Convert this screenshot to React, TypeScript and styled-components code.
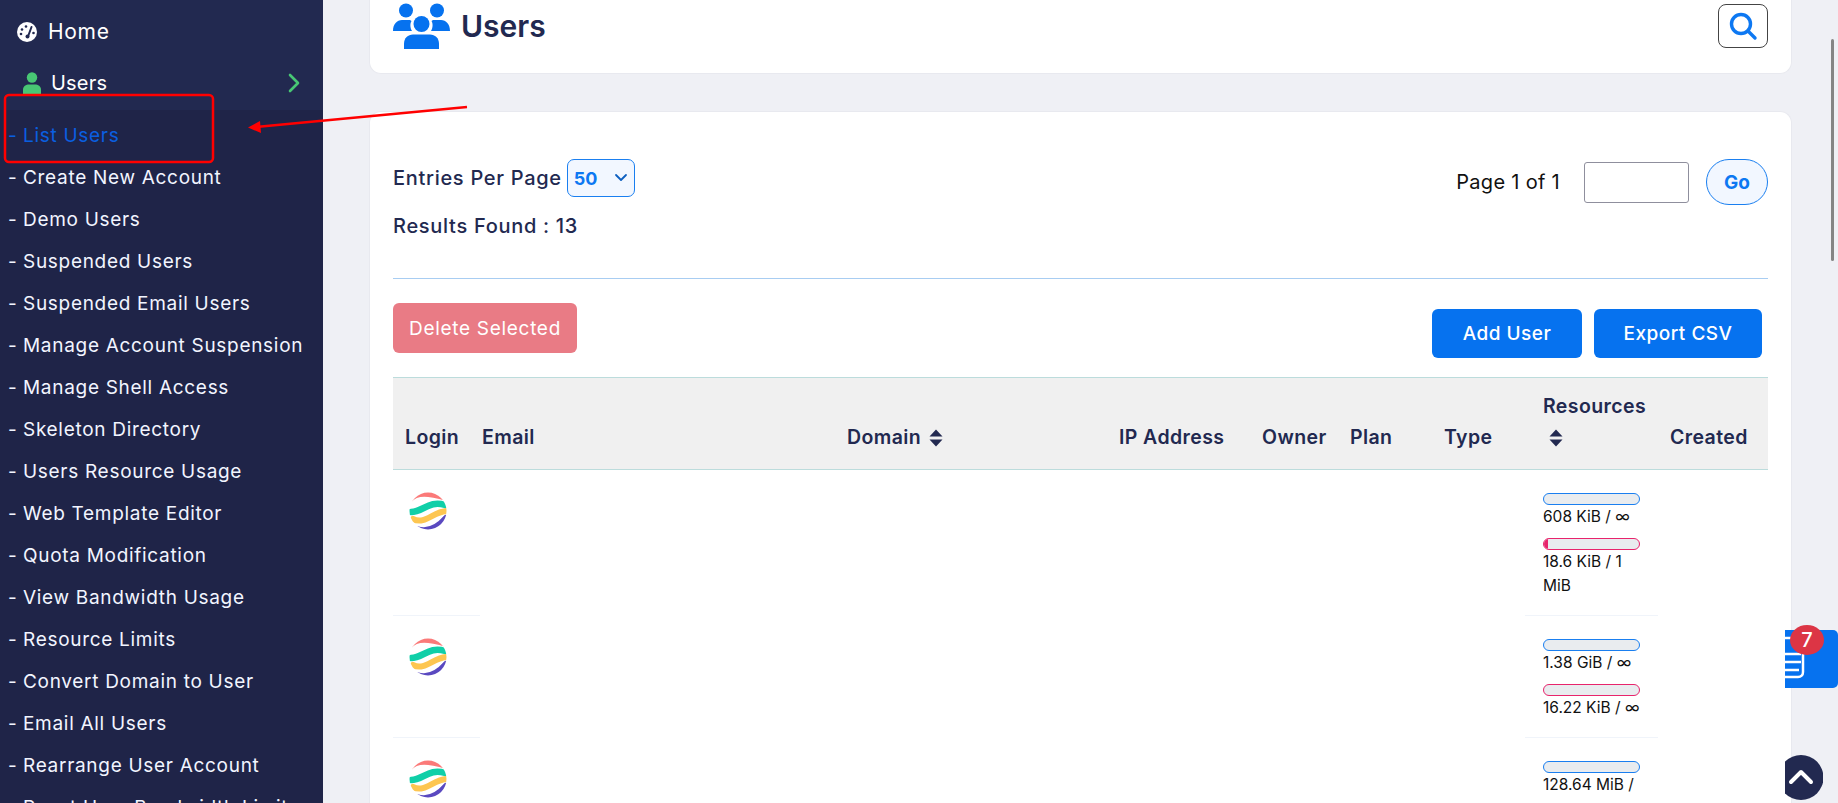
import React from 'react';
import styled, { createGlobalStyle } from 'styled-components';

const GlobalStyle = createGlobalStyle`
  html, body {
    margin: 0;
    padding: 0;
    height: 100%;
    overflow: hidden;
    background: #eff0f5;
    font-family: Inter, 'Noto Sans', sans-serif;
  }
  * { box-sizing: border-box; }
`;

const Page = styled.div`
  position: relative;
  display: flex;
  width: 1838px;
  height: 803px;
  overflow: hidden;
`;

const Sidebar = styled.aside`
  width: 323px;
  flex: none;
  background: #222950;
  color: #fff;
`;

const TopLink = styled.div<{ $pad: number }>`
  display: flex;
  align-items: center;
  height: 55px;
  padding-left: ${(p) => p.$pad}px;
  font-size: 20px;
  letter-spacing: 0.2px;
`;

const HomeLink = styled(TopLink)`
  gap: 11px;
  padding-top: 8px;
  font-size: 21px;
  letter-spacing: 0.7px;
`;

const UsersLink = styled(TopLink)`
  justify-content: space-between;
  padding-right: 23px;
`;

const UsersLabel = styled.span`
  display: flex;
  align-items: center;
  gap: 10px;
`;

const SubMenu = styled.ul`
  list-style: none;
  margin: 0;
  padding: 4px 0 0 8px;
  background: #1f2448;
  height: 693px;
  overflow: hidden;
`;

const SubItem = styled.li<{ $active?: boolean }>`
  display: flex;
  height: 42px;
  align-items: center;
  font-size: 19px;
  letter-spacing: 0.7px;
  white-space: nowrap;
  color: ${(p) => (p.$active ? '#0a5fe0' : '#f2f5ff')};
`;

const Dash = styled.span`
  width: 15px;
  flex: none;
`;

const Main = styled.main`
  flex: 1;
  padding-left: 46px;
  padding-right: 46px;
`;

const HeaderCard = styled.section`
  display: flex;
  align-items: center;
  justify-content: space-between;
  height: 74px;
  padding: 0 23px 22px 23px;
  background: #fff;
  border: 1px solid #e8e9ef;
  border-top: 0;
  border-radius: 0 0 12px 12px;
`;

const HeaderTitle = styled.h1`
  display: flex;
  align-items: center;
  gap: 11px;
  margin: 0;
  font-size: 30px;
  font-weight: 600;
  color: #222950;
`;

const SearchButton = styled.button`
  display: flex;
  align-items: center;
  justify-content: center;
  width: 50px;
  height: 44px;
  padding: 0;
  background: #fff;
  border: 1px solid #444;
  border-radius: 8px;
  color: #0d78f2;
`;

const ContentCard = styled.section`
  margin-top: 37px;
  height: 720px;
  padding: 47px 23px 0 23px;
  background: #fff;
  border: 1px solid #e8e9ef;
  border-bottom: 0;
  border-radius: 12px 12px 0 0;
`;

const TopRow = styled.div`
  display: flex;
  justify-content: space-between;
  height: 120px;
  border-bottom: 1px solid #a8cdf2;
`;

const EntriesBlock = styled.div`
  display: flex;
  flex-direction: column;
  gap: 17px;
  font-size: 20px;
  letter-spacing: 0.7px;
  font-weight: 500;
  color: #222950;
`;

const EntriesLine = styled.div`
  display: flex;
  align-items: center;
  gap: 5px;
`;

const PerPage = styled.div`
  display: flex;
  align-items: center;
  justify-content: space-between;
  width: 68px;
  height: 38px;
  padding: 0 6px;
  background: #f2f7ff;
  border: 1px solid #1a7ff0;
  border-radius: 7px;
  color: #0d78f2;
  font-weight: 700;
  font-size: 18px;
  letter-spacing: 0;
`;

const Pager = styled.div`
  display: flex;
  align-items: center;
  height: 46px;
  font-size: 20px;
  letter-spacing: 0.3px;
  color: #111;
`;

const PageInput = styled.div`
  width: 105px;
  height: 41px;
  margin-left: 24px;
  border: 1px solid #8f8f9d;
  border-radius: 3px;
`;

const GoButton = styled.button`
  width: 62px;
  height: 46px;
  margin-left: 17px;
  padding: 0;
  background: #f2f7ff;
  border: 1px solid #1a7ff0;
  border-radius: 23px;
  color: #0d78f2;
  font: 700 19px Inter, sans-serif;
`;

const ActionRow = styled.div`
  display: flex;
  align-items: flex-start;
  justify-content: space-between;
  height: 98px;
  padding-top: 24px;
`;

const DeleteButton = styled.button`
  width: 184px;
  height: 50px;
  padding: 0;
  background: #e97b85;
  border: 0;
  border-radius: 6px;
  color: #fff;
  font: 400 19px Inter, sans-serif;
  letter-spacing: 0.7px;
`;

const ActionGroup = styled.div`
  display: flex;
  gap: 12px;
  padding: 6px 6px 0 0;
`;

const PrimaryButton = styled.button<{ $width: number }>`
  width: ${(p) => p.$width}px;
  height: 49px;
  padding: 0;
  background: #0672ef;
  border: 0;
  border-radius: 6px;
  color: #fff;
  font: 500 19px Inter, sans-serif;
  letter-spacing: 0.5px;
`;

const UsersTable = styled.table`
  width: 1375px;
  table-layout: fixed;
  border-collapse: collapse;
  color: #111;
`;

const HeadRow = styled.tr`
  height: 92px;
  background: #f0f0f0;
  border-top: 1px solid #bcdcdc;
  border-bottom: 1px solid #bcdcdc;
`;

const HeadCell = styled.th<{ $pad?: number }>`
  padding: 0 0 20px ${(p) => p.$pad ?? 12}px;
  text-align: left;
  vertical-align: bottom;
  font-size: 19.5px;
  letter-spacing: 0.4px;
  font-weight: 600;
  color: #222950;
  white-space: nowrap;
`;

const SortIcon = styled.svg`
  display: inline-block;
  width: 14px;
  height: 18px;
  margin-left: 8px;
  vertical-align: -3px;
`;

const ResourceHead = styled.div`
  display: flex;
  flex-direction: column;
  gap: 7px;
`;

const Cell = styled.td<{ $lined?: boolean }>`
  vertical-align: top;
  padding: 0;
  border-bottom: ${(p) => (p.$lined ? '1px solid #f0f4fa' : '0')};
`;

const AvatarWrap = styled.div`
  padding: 22px 0 0 16px;
`;

const ResourceWrap = styled.div`
  padding: 23px 14px 17px 18px;
  font-size: 15.5px;
  line-height: 24px;
`;

const Bar = styled.div<{ $color: string }>`
  height: 12px;
  width: 97px;
  background: #e9ecef;
  border: 1px solid ${(p) => p.$color};
  border-radius: 6px;
  overflow: hidden;
`;

const BarFill = styled.div<{ $color: string }>`
  height: 100%;
  background: ${(p) => p.$color};
`;

const ResourceEntry = styled.div`
  margin-bottom: 9px;
  &:last-child {
    margin-bottom: 0;
  }
`;

const ScrollThumb = styled.div`
  position: absolute;
  right: 4px;
  top: 39px;
  width: 3px;
  height: 222px;
  border-radius: 2px;
  background: #858585;
`;

const NotesWidget = styled.div`
  position: absolute;
  left: 1785px;
  top: 630px;
  width: 53px;
  height: 58px;
  background: #0672ef;
  border-radius: 0 5px 5px 0;
  overflow: hidden;
`;

const NotesBadge = styled.div`
  position: absolute;
  left: 1790px;
  top: 625px;
  width: 34px;
  height: 30px;
  display: flex;
  align-items: center;
  justify-content: center;
  background: #dc3545;
  border-radius: 50%;
  color: #fff;
  font-size: 20px;
  font-weight: 500;
`;

const ScrollTop = styled.div`
  position: absolute;
  left: 1785px;
  top: 755px;
  width: 38px;
  height: 45px;
  overflow: hidden;
`;

const Annotation = styled.svg`
  position: absolute;
  left: 0;
  top: 0;
  pointer-events: none;
`;

const menu = [
  'List Users',
  'Create New Account',
  'Demo Users',
  'Suspended Users',
  'Suspended Email Users',
  'Manage Account Suspension',
  'Manage Shell Access',
  'Skeleton Directory',
  'Users Resource Usage',
  'Web Template Editor',
  'Quota Modification',
  'View Bandwidth Usage',
  'Resource Limits',
  'Convert Domain to User',
  'Email All Users',
  'Rearrange User Account',
  'Reset User Bandwidth Limit',
];

const rows = [
  { disk: '608 KiB / ∞', bandwidth: '18.6 KiB / 1 MiB', fill: 4 },
  { disk: '1.38 GiB / ∞', bandwidth: '16.22 KiB / ∞', fill: 0 },
  { disk: '128.64 MiB / ∞', bandwidth: '1 MiB / ∞', fill: 0 },
];

const Gauge = () => (
  <svg width="20" height="20" viewBox="0 0 20 20">
    <circle cx="10" cy="10" r="10" fill="#fff" />
    <path d="M11 14.5 L14.5 5" stroke="#222950" strokeWidth="2" strokeLinecap="round" />
    <circle cx="10.5" cy="14.5" r="2" fill="#222950" />
    <circle cx="4" cy="12" r="1.3" fill="#222950" />
    <circle cx="5" cy="7.5" r="1.3" fill="#222950" />
    <circle cx="9" cy="4.5" r="1.3" fill="#222950" />
    <circle cx="16.5" cy="11" r="1.3" fill="#222950" />
  </svg>
);

const UserGlyph = () => (
  <svg width="18" height="22" viewBox="0 0 18 22">
    <circle cx="9" cy="5.5" r="5.2" fill="#48c774" />
    <path d="M0 22 V18 C0 14 3 12.5 6 12.5 H12 C15 12.5 18 14 18 18 V22 Z" fill="#48c774" />
  </svg>
);

const Chevron = () => (
  <svg width="12" height="20" viewBox="0 0 12 20">
    <path d="M2 2 L10 10 L2 18" fill="none" stroke="#48c774" strokeWidth="2.6" strokeLinecap="round" strokeLinejoin="round" />
  </svg>
);

const GroupGlyph = () => (
  <svg width="57" height="46" viewBox="0 0 57 46">
    <g fill="#0672ef">
      <circle cx="13" cy="7.5" r="7" />
      <circle cx="44" cy="7.5" r="7" />
      <path d="M0 28 C0 21 4 17 9 17 H16 C17 17 18 17.5 18.5 18 C17 20 17 25 19 28 Z" />
      <path d="M57 28 C57 21 53 17 48 17 H41 C40 17 39 17.5 38.5 18 C40 20 40 25 38 28 Z" />
      <circle cx="28.5" cy="21" r="8" />
      <path d="M11 46 V41 C11 35 15 31.5 20 31.5 H37 C42 31.5 46 35 46 41 V46 C46 46 11 46 11 46 Z" />
    </g>
  </svg>
);

const SearchGlyph = () => (
  <svg width="30" height="30" viewBox="0 0 30 30">
    <circle cx="13" cy="13" r="9.5" fill="none" stroke="currentColor" strokeWidth="3.4" />
    <path d="M20 20 L27 27" stroke="currentColor" strokeWidth="3.4" strokeLinecap="round" />
  </svg>
);

const Caret = () => (
  <svg width="14" height="10" viewBox="0 0 14 10">
    <path d="M2 2 L7 7 L12 2" fill="none" stroke="#0d5fc0" strokeWidth="1.8" strokeLinecap="round" strokeLinejoin="round" />
  </svg>
);

const Sort = () => (
  <SortIcon viewBox="0 0 14 18">
    <path d="M7 0.5 L13.5 7.5 H0.5 Z M7 17.5 L0.5 10.5 H13.5 Z" fill="#222950" />
  </SortIcon>
);

const Logo = () => (
  <svg width="38" height="38" viewBox="0 0 38 38">
    <defs>
      <clipPath id="logoClip">
        <circle cx="19" cy="19" r="18.5" />
      </clipPath>
    </defs>
    <g clipPath="url(#logoClip)" fill="none" strokeLinecap="round">
      <path d="M0 8 C8 -1 20 1 38 6" stroke="#fb7a79" strokeWidth="6" />
      <path d="M2 20 C14 20 20 8 36 13" stroke="#10cfa8" strokeWidth="6.5" />
      <path d="M4 27 C16 33 24 20 37 19" stroke="#fdc651" strokeWidth="6" />
      <path d="M8 37 C20 41 30 34 37 26" stroke="#5a49c0" strokeWidth="6" />
    </g>
  </svg>
);

const App = () => (
  <Page>
    <GlobalStyle />
    <Sidebar>
      <HomeLink $pad={17}>
        <Gauge />
        Home
      </HomeLink>
      <UsersLink $pad={23}>
        <UsersLabel>
          <UserGlyph />
          Users
        </UsersLabel>
        <Chevron />
      </UsersLink>
      <SubMenu>
        {menu.map((item, i) => (
          <SubItem key={item} $active={i === 0}>
            <Dash>-</Dash>
            <span>{item}</span>
          </SubItem>
        ))}
      </SubMenu>
    </Sidebar>
    <Main>
      <HeaderCard>
        <HeaderTitle>
          <GroupGlyph />
          Users
        </HeaderTitle>
        <SearchButton>
          <SearchGlyph />
        </SearchButton>
      </HeaderCard>
      <ContentCard>
        <TopRow>
          <EntriesBlock>
            <EntriesLine>
              Entries Per Page
              <PerPage>
                50
                <Caret />
              </PerPage>
            </EntriesLine>
            <div>Results Found : 13</div>
          </EntriesBlock>
          <Pager>
            Page 1 of 1
            <PageInput />
            <GoButton>Go</GoButton>
          </Pager>
        </TopRow>
        <ActionRow>
          <DeleteButton>Delete Selected</DeleteButton>
          <ActionGroup>
            <PrimaryButton $width={150}>Add User</PrimaryButton>
            <PrimaryButton $width={168}>Export CSV</PrimaryButton>
          </ActionGroup>
        </ActionRow>
        <UsersTable>
          <colgroup>
            <col style={{ width: 87 }} />
            <col style={{ width: 355 }} />
            <col style={{ width: 272 }} />
            <col style={{ width: 143 }} />
            <col style={{ width: 88 }} />
            <col style={{ width: 94 }} />
            <col style={{ width: 93 }} />
            <col style={{ width: 133 }} />
            <col />
          </colgroup>
          <thead>
            <HeadRow>
              <HeadCell>Login</HeadCell>
              <HeadCell $pad={2}>Email</HeadCell>
              <HeadCell $pad={12}>
                Domain
                <Sort />
              </HeadCell>
              <HeadCell>IP Address</HeadCell>
              <HeadCell>Owner</HeadCell>
              <HeadCell>Plan</HeadCell>
              <HeadCell>Type</HeadCell>
              <HeadCell $pad={18}>
                <ResourceHead>
                  <span>Resources</span>
                  <span>
                    <SortIcon viewBox="0 0 14 18" style={{ marginLeft: 6 }}>
                      <path d="M7 0.5 L13.5 7.5 H0.5 Z M7 17.5 L0.5 10.5 H13.5 Z" fill="#222950" />
                    </SortIcon>
                  </span>
                </ResourceHead>
              </HeadCell>
              <HeadCell>Created</HeadCell>
            </HeadRow>
          </thead>
          <tbody>
            {rows.map((row) => (
              <tr key={row.disk}>
                <Cell $lined>
                  <AvatarWrap>
                    <Logo />
                  </AvatarWrap>
                </Cell>
                <Cell colSpan={6} />
                <Cell $lined>
                  <ResourceWrap>
                    <ResourceEntry>
                      <Bar $color="#1a7ff0" />
                      {row.disk}
                    </ResourceEntry>
                    <ResourceEntry>
                      <Bar $color="#e8246c">
                        <BarFill $color="#e8246c" style={{ width: row.fill }} />
                      </Bar>
                      {row.bandwidth}
                    </ResourceEntry>
                  </ResourceWrap>
                </Cell>
                <Cell />
              </tr>
            ))}
          </tbody>
        </UsersTable>
      </ContentCard>
    </Main>
    <ScrollThumb />
    <NotesWidget>
      <svg width="53" height="58" viewBox="0 0 53 58">
        <path d="M-6 8 H18 V42 C18 45 16 47 13 47 H-6" fill="none" stroke="#fff" strokeWidth="2.5" />
        <path d="M0 24 H16 M0 32 H16 M0 40 H14" stroke="#fff" strokeWidth="2.5" />
      </svg>
    </NotesWidget>
    <NotesBadge>7</NotesBadge>
    <ScrollTop>
      <svg width="38" height="45" viewBox="0 0 38 45">
        <circle cx="16" cy="22.5" r="22.5" fill="#222950" />
        <path d="M6 27 L16 17 L26 27" fill="none" stroke="#fff" strokeWidth="4" strokeLinecap="round" strokeLinejoin="round" />
      </svg>
    </ScrollTop>
    <Annotation width="1838" height="803" viewBox="0 0 1838 803">
      <rect x="5" y="95" width="208" height="67" rx="4" fill="none" stroke="#f00" strokeWidth="2.5" />
      <path d="M467 107 L256 127" stroke="#f00" strokeWidth="2.5" />
      <path d="M248 127.5 L260 121 L261 133 Z" fill="#f00" />
    </Annotation>
  </Page>
);

export default App;
